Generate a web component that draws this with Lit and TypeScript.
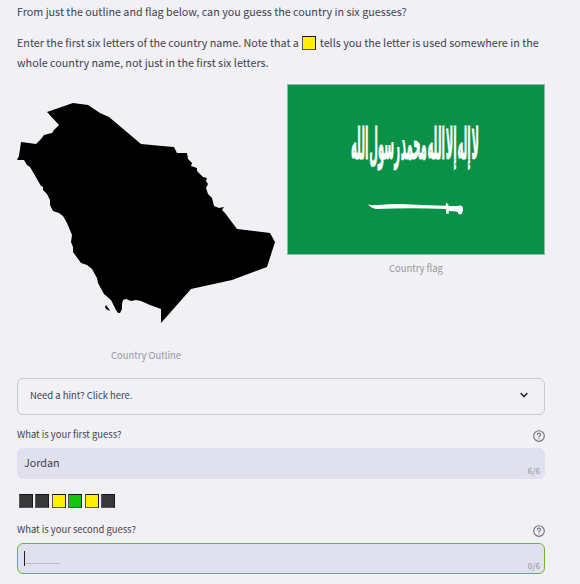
import { LitElement, html, css } from "lit";
import { customElement, property } from "lit/decorators.js";

@customElement("letter-tile")
class LetterTile extends LitElement {
  @property({ reflect: true }) kind = "miss";
  static styles = css`
    :host { display: inline-block; box-sizing: border-box; width: 14px; height: 14px;
      border: 1px solid #171717; border-bottom-color: #555; border-left-color: #555; background: #383838; }
    :host([kind="near"]) { background: #fff000; }
    :host([kind="hit"]) { background: #16c60c; }
  `;
  render() { return html``; }
}

@customElement("guess-field")
class GuessField extends LitElement {
  @property() label = "";
  @property() value = "";
  @property({ type: Boolean, reflect: true }) active = false;
  static styles = css`
    :host { display: block; }
    .head { display: flex; justify-content: space-between; height: 19px; }
    .label { font-size: 9.42px; line-height: 11px; white-space: nowrap; }
    .help { width: 12px; height: 12px; margin-top: 1px; }
    .box { box-sizing: border-box; height: 31px; border: 1px solid #e0e0ee; border-radius: 6px;
      background: #e0e0ee; display: flex; justify-content: space-between; padding: 0 4px 0 6px; }
    :host([active]) .box { border-color: #6eb52f; }
    .value { font-size: 10.75px; line-height: 27px; }
    .entry { display: flex; }
    .caret { width: 1px; height: 15px; margin-top: 7px; background: #20212b; }
    .blank { width: 35px; height: 1px; margin-top: 19px; background: #b9b9c7; }
    .count { align-self: flex-end; font-size: 8.1px; line-height: 12px; color: #92939e; margin-bottom: 1px; }
  `;
  render() {
    return html`
      <div class="head"><span class="label">${this.label}</span>
        <svg class="help" viewBox="0 0 12 12" fill="none" stroke="#777883" stroke-width="1.15" stroke-linecap="round">
          <circle cx="6" cy="6" r="5.3"></circle>
          <path d="M4.4 4.6C4.5 2.6 7.7 2.7 7.6 4.7C7.5 5.8 6 5.8 6 7"></path><path d="M6 8.8v.1"></path>
        </svg></div>
      <div class="box">
        ${this.active ? html`<div class="entry"><i class="caret"></i><i class="blank"></i></div>`
          : html`<span class="value">${this.value}</span>`}
        <span class="count">${this.value.length}/6</span>
      </div>`;
  }
}

@customElement("app-root")
class AppRoot extends LitElement {
  static styles = css`
    :host { display: block; box-sizing: border-box; width: 580px; height: 584px; overflow: hidden;
      padding: 2px 35px 0 17px; background: #f0f0f5; color: #41434e;
      font-family: "Noto Sans CJK SC", "Noto Sans", sans-serif; }
    p { margin: 0; font-size: 10.75px; line-height: 20px; height: 20px; white-space: nowrap; }
    .rules { margin-top: 11px; height: 40px; }
    .rules letter-tile { vertical-align: -3px; margin: 0 1px; }
    .pictures { display: flex; gap: 12px; height: 294px; margin-top: 11px; }
    figure { margin: 0; width: 258px; }
    figure svg { display: block; width: 258px; }
    .outline { height: 257px; }
    .flag { height: 171px; }
    .motto { font-family: "DejaVu Sans", sans-serif; font-weight: 700; font-size: 11px; word-spacing: -3px;
      fill: #fff; stroke: #fff; stroke-width: 0.25; }
    figcaption { text-align: center; font-size: 9.4px; line-height: 14px; margin-top: 7px; color: #94959e; }
    .flag + figcaption { margin-top: 6px; }
    .hint { box-sizing: border-box; height: 37px; border: 1px solid #c9c9d0; border-radius: 6px;
      display: flex; align-items: center; justify-content: space-between; padding: 0 15px 3px 12px; font-size: 9.45px; }
    .hint svg { width: 10px; height: 8px; }
    .first { margin-top: 14px; }
    .tiles { display: flex; gap: 2.5px; padding: 15px 0 0 1.5px; height: 30px; }
  `;
  render() {
    return html`
      <p>From just the outline and flag below, can you guess the country in six guesses?</p>
      <p class="rules">Enter the first six letters of the country name. Note that a <letter-tile kind="near"></letter-tile> tells you the letter is used somewhere in the<br>whole country name, not just in the first six letters.</p>
      <div class="pictures">
        <figure>
          <svg class="outline" viewBox="17 84 258 257">
            <path d="M47 112L73 103L88 105L100 113L109 117L141 144L162 146L174 147L177 153L187 153L188 159L192 163L191 166L197 168L197 171L203 177L207 178L206 181L208 184L206 188L208 194L212 198L214 206L219 208L224 207L222 210L225 213L237 229L270 233L275 242L267 267L232 280L191 289L161 323V309L150 305L141 301L136 300L131 301L126 299L123 300L122 304V309L120 313H118L116 310L111 300L104 294L98 283L97 278L92 269L87 265L81 263L73 252V247L71 242L72 235L67 223L63 216L59 213L53 211L50 205V200L47 194L43 190V187L41 186L30 167L27 165L24 160H17L19 156L21 142L36 144L41 139L44 135L52 133L54 130L59 125Z"></path>
            <path d="M106 305L109 309L110 311L106 309L105 307Z"></path>
          </svg>
          <figcaption>Country Outline</figcaption>
        </figure>
        <figure>
          <svg class="flag" viewBox="287 84 258 171">
            <rect x="287.5" y="84.5" width="257" height="170" fill="#099247" stroke="#8cbda2"></rect>
            <text class="motto" transform="translate(351 159) scale(1 4)" textLength="128" lengthAdjust="spacingAndGlyphs">لا إله إلا الله محمد رسول الله</text>
            <path fill="#fff" d="M368 204.5C374 205.5 380 205 389 204.2C405 203.5 417 205 445.5 205.7L446 202.5L448.5 204.5V206H458C461 205 463 206 463 208.5C463 211 462.5 214.5 460 214.5C457.5 214.5 459 211.5 456 211.5L449 211L448.5 214L446 213.5V209C423 208 399 208 376 209C372 208.5 370 206.5 368 204.5Z"></path>
          </svg>
          <figcaption>Country flag</figcaption>
        </figure>
      </div>
      <div class="hint"><span>Need a hint? Click here.</span>
        <svg viewBox="0 0 10 8" fill="none" stroke="#31333f" stroke-width="1.7"><path d="M1.7 2.2L5 5.5L8.3 2.2"></path></svg></div>
      <guess-field class="first" label="What is your first guess?" value="Jordan"></guess-field>
      <div class="tiles">${["miss", "miss", "near", "hit", "near", "miss"].map((k) => html`<letter-tile kind=${k}></letter-tile>`)}</div>
      <guess-field label="What is your second guess?" active></guess-field>`;
  }
}
